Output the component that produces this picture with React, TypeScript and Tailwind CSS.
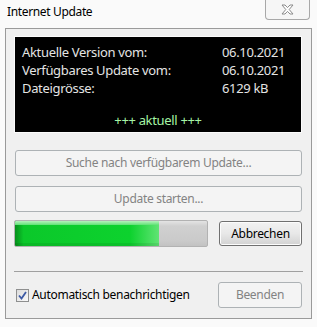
import React from "react";

const font = { fontFamily: '"Noto Sans", "Segoe UI", sans-serif' };

function DisabledButton({ label, className }: { label: string; className: string }) {
  return (
    <div
      className={`flex items-center justify-center rounded-[3px] border border-[#adb2b5] bg-[#f4f4f4] text-[12px] tracking-[-0.3px] text-[#838383] ${className}`}
    >
      {label}
    </div>
  );
}

export default function App() {
  return (
    <div
      className="relative flex h-[327px] w-[317px] flex-col overflow-hidden bg-[#fafafa] text-[12px] leading-none text-black"
      style={font}
    >
      {/* title bar */}
      <div className="flex h-[28px] items-start">
        <div className="pl-[7px] pt-[6px] text-[12px] tracking-[-0.35px]">Internet Update</div>
        <div className="ml-auto mr-[7px] flex h-[20px] w-[45px] items-center justify-center rounded-b-[4px] border border-t-0 border-[#a8a8a8] bg-[#f6f6f6]">
          <svg width="13" height="11" viewBox="0 0 13 11">
            <path
              d="M1 1 H4 L6.5 3.6 L9 1 H12 L8.2 5.5 L12 10 H9 L6.5 7.4 L4 10 H1 L4.8 5.5 Z"
              fill="#ffffff"
              stroke="#8a8a8a"
              strokeWidth="1"
              strokeLinejoin="round"
            />
          </svg>
        </div>
      </div>

      {/* main panel */}
      <div className="mx-[5px] flex h-[291px] flex-col border border-[#9a9a9a] bg-[#f0f0f0] pl-[8px] pr-[9px] pt-[7px]">
        {/* black info box */}
        <div className="flex h-[97px] flex-col border border-[#fcfcfc] bg-black pl-[7px] pt-[6px] text-[13px] tracking-[-0.33px] text-[#e4e4e4]">
          <div className="flex h-[18px] items-center">
            <span className="w-[200px]">Aktuelle Version vom:</span>
            <span>06.10.2021</span>
          </div>
          <div className="flex h-[18px] items-center">
            <span className="w-[200px]">Verfügbares Update vom:</span>
            <span>06.10.2021</span>
          </div>
          <div className="flex h-[18px] items-center">
            <span className="w-[200px]">Dateigrösse:</span>
            <span>6129 kB</span>
          </div>
          <div className="mt-[14px] flex h-[18px] items-center justify-center pr-[7px] text-[#a6f5a6]">
            +++ aktuell +++
          </div>
        </div>

        <DisabledButton label="Suche nach verfügbarem Update..." className="ml-[1px] mt-[17px] h-[26px]" />
        <DisabledButton label="Update starten..." className="ml-[1px] mt-[10px] h-[26px]" />

        {/* progress row */}
        <div className="mt-[8px] flex items-center">
          <div className="relative h-[27px] w-[194px] overflow-hidden rounded-[2px] border border-[#b2b2b2] bg-[linear-gradient(to_bottom,#e4e4e4_0%,#d0d0d0_20%,#cacaca_80%,#c2c2c2_100%)]">
            <div className="absolute inset-y-0 left-0 w-[144px] bg-[linear-gradient(to_right,#078f1c_0%,#0bc82a_6%,#0dd22e_80%,#60e474_100%)]" />
            <div className="absolute left-0 top-0 h-[4px] w-[144px] bg-[linear-gradient(to_bottom,#b6f2bd,#5fe275)]" />
            <div className="absolute bottom-0 left-0 h-[3px] w-[144px] bg-[#00000014]" />
          </div>
          <div className="ml-auto flex h-[25px] w-[83px] items-center justify-center rounded-[3px] border border-[#707070] bg-gradient-to-b from-[#f2f2f2] via-[#e8e8e8] to-[#d2d2d2] text-[12px] tracking-[-0.3px] shadow-[inset_0_0_0_1px_#fcfcfc]">
            Abbrechen
          </div>
        </div>

        {/* separator */}
        <div className="mt-[24px] h-px w-[289px] bg-[#a0a0a0]" />

        {/* bottom row */}
        <div className="mt-[10px] flex items-center">
          <div className="ml-[2px] flex h-[13px] w-[13px] items-center justify-center border border-[#8e8f8f] bg-gradient-to-br from-[#dcdcdc] to-[#fafafa]">
            <svg width="9" height="9" viewBox="0 0 9 9">
              <path d="M1 4.5 L3.5 7.5 L8 1" fill="none" stroke="#3d5aa5" strokeWidth="1.8" />
            </svg>
          </div>
          <span className="ml-[3px] text-[12px] tracking-[-0.3px]">Automatisch benachrichtigen</span>
          <div className="ml-auto flex h-[26px] w-[84px] items-center justify-center rounded-[3px] border border-[#adb2b5] bg-[#f4f4f4] text-[12px] tracking-[-0.3px] text-[#838383]">
            Beenden
          </div>
        </div>
      </div>
    </div>
  );
}
